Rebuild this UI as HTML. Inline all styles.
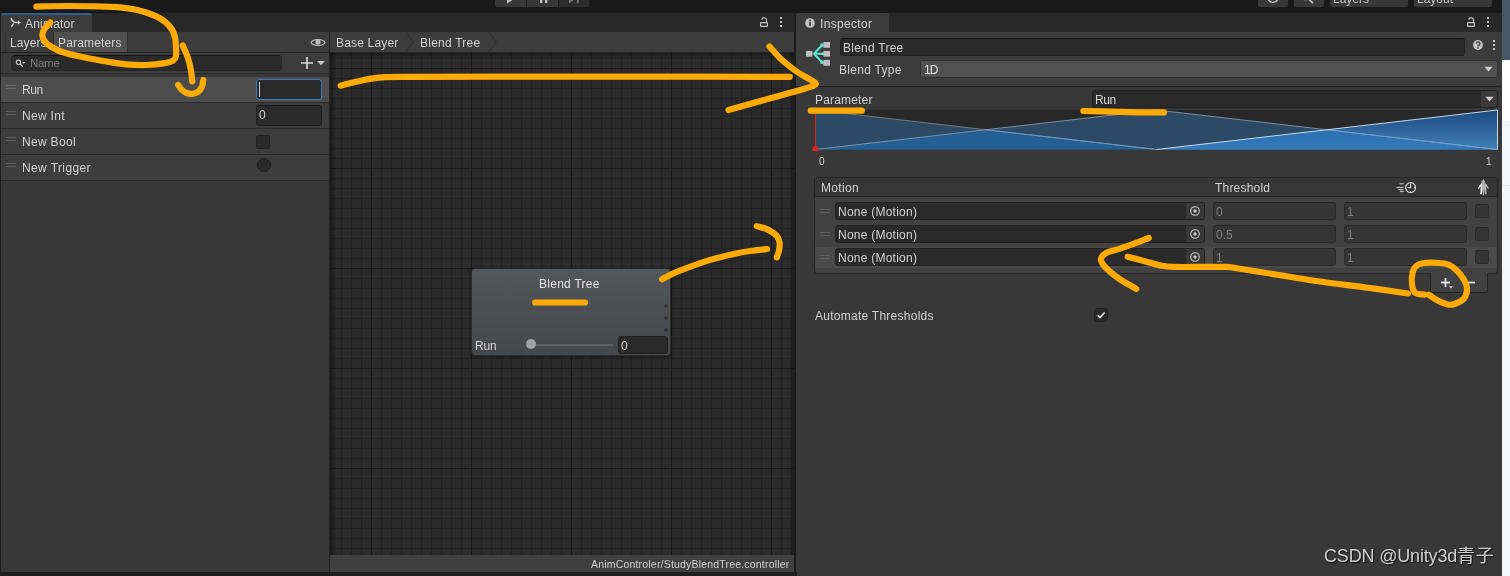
<!DOCTYPE html>
<html lang="en">
<head>
<meta charset="utf-8">
<title>Unity Animator - Blend Tree</title>
<style>
html,body{margin:0;padding:0;}
body{width:1510px;height:576px;overflow:hidden;background:#191919;position:relative;
  font-family:"Liberation Sans","Noto Sans CJK SC",sans-serif;font-size:12px;color:#d2d2d2;}
.a{position:absolute;box-sizing:border-box;}
.t{position:absolute;white-space:nowrap;line-height:14px;height:14px;will-change:transform;}
.field{position:absolute;box-sizing:border-box;background:#2a2a2a;border:1px solid #212121;border-top-color:#161616;border-radius:3px;}
.dis{background:#353535;border-color:#2b2b2b;border-top-color:#262626;}
.hd{position:absolute;width:10px;height:1px;background:#5e5e5e;}
</style>
</head>
<body>

<!-- ===== top application bar ===== -->
<div class="a" id="topbar" style="left:0;top:0;width:1502px;height:13px;background:#191919;"></div>


<!-- top toolbar remnants -->
<div class="a" style="left:495px;top:0;width:31px;height:7px;background:#383838;border-radius:0 0 0 2px;"></div>
<div class="a" style="left:527px;top:0;width:31px;height:7px;background:#383838;"></div>
<div class="a" style="left:559px;top:0;width:30px;height:7px;background:#2c2c2c;border-radius:0 0 2px 0;"></div>
<svg class="a" style="left:495px;top:0;" width="95" height="7" viewBox="0 0 95 7"><path d="M12 -3 L17.2 0.2 L12 3.4 Z" fill="#c4c4c4"/><path d="M45 -2 H47.3 V3 H45 Z M50 -2 H52.3 V3 H50 Z" fill="#c4c4c4"/><path d="M74 -3 L78.6 0.2 L74 3.2 Z M82 -2 H83.8 V3 H82 Z" fill="#7a7a7a"/></svg>
<div class="a" style="left:1258px;top:0;width:30px;height:7px;background:#383838;border-radius:0 0 2px 2px;"></div>
<div class="a" style="left:1294px;top:0;width:30px;height:7px;background:#383838;border-radius:0 0 2px 2px;"></div>
<div class="a" style="left:1330px;top:0;width:78px;height:7px;background:#383838;border-radius:0 0 2px 2px;overflow:hidden;"><div class="t" id="t_toplayers" style="left:3px;top:-8px;color:#c4c4c4;">Layers</div></div>
<div class="a" style="left:1414px;top:0;width:78px;height:7px;background:#383838;border-radius:0 0 2px 2px;overflow:hidden;"><div class="t" id="t_toplayout" style="left:3px;top:-8px;color:#c4c4c4;">Layout</div></div>
<svg class="a" style="left:1258px;top:0;" width="70" height="7" viewBox="0 0 70 7"><circle cx="15" cy="-3" r="5.4" fill="none" stroke="#c4c4c4" stroke-width="1.3"/><path d="M50 -1.5 L54.5 2.6" stroke="#c4c4c4" stroke-width="1.6" stroke-linecap="round"/><circle cx="47" cy="-4" r="3.6" fill="none" stroke="#c4c4c4" stroke-width="1.3"/></svg>

<!-- ===== right page strip ===== -->
<div class="a" style="left:1502px;top:0;width:8px;height:576px;background:#f5f6f7;"></div>
<div class="a" style="left:1502px;top:0;width:8px;height:60px;background:#465a66;"></div>
<div class="a" style="left:1502px;top:60px;width:8px;height:61px;background:#ffffff;"></div>
<div class="a" style="left:1502px;top:185px;width:8px;height:1px;background:#e6e6e8;"></div>

<!-- ===== ANIMATOR WINDOW ===== -->
<div class="a" id="anim" style="left:0;top:13px;width:795px;height:559px;background:#383838;"></div>
<div class="a" id="animtabbar" style="left:0;top:13px;width:795px;height:19px;background:#282828;"></div>


<!-- animator tab -->
<div class="a" style="left:1px;top:13px;width:91px;height:19px;background:#3c3c3c;border-top:2px solid #2c5f8f;border-radius:2px 2px 0 0;"></div>
<svg class="a" style="left:9px;top:17px;" width="14" height="12" viewBox="0 0 14 12"><path d="M2.3 1.4 C2.7 3.4 3.8 4.8 5.6 5.2 L9.6 5.5 M2.7 9.4 L4.4 6.9" fill="none" stroke="#d2d2d2" stroke-width="1.4" stroke-linecap="round"/><path d="M9 3.5 L11.9 5.5 L9 7.6 Z" fill="#d2d2d2"/></svg>
<div class="t" id="t_animator" style="left:25px;top:17px;letter-spacing:0.21px;">Animator</div>
<!-- animator tabbar icons -->
<svg class="a" style="left:758px;top:16px;" width="12" height="12" viewBox="0 0 12 12"><rect x="2.6" y="6.7" width="6.8" height="3.7" rx="0.6" fill="none" stroke="#c8c8c8" stroke-width="1.2"/><path d="M8.5 6.4 V4.3 A2.3 2.3 0 0 0 4 3.4" fill="none" stroke="#c8c8c8" stroke-width="1.2" stroke-linecap="round"/></svg>
<div class="a" style="left:780px;top:17px;width:2px;height:2px;background:#c4c4c4;box-shadow:0 4px 0 #c4c4c4,0 8px 0 #c4c4c4;"></div>

<!-- left panel toolbar -->
<div class="a" style="left:0;top:32px;width:330px;height:21px;background:#3c3c3c;border-bottom:1px solid #232323;"></div>
<div class="a" style="left:5px;top:32px;width:1px;height:20px;background:#2b2b2b;"></div>
<div class="a" style="left:53px;top:32px;width:75px;height:20px;background:#505050;border-left:1px solid #2f2f2f;border-right:1px solid #2f2f2f;"></div>
<div class="t" id="t_layers" style="left:10px;top:36px;letter-spacing:0.11px;">Layers</div>
<div class="t" id="t_params" style="left:58px;top:36px;letter-spacing:0.16px;">Parameters</div>
<svg class="a" style="left:310px;top:37px;" width="16" height="11" viewBox="0 0 16 11"><path d="M1 5.5 C3.5 1.5 12.5 1.5 15 5.5 C12.5 9.5 3.5 9.5 1 5.5 Z" fill="none" stroke="#c8c8c8" stroke-width="1.1"/><circle cx="8" cy="5" r="2.6" fill="#bdbdbd"/></svg>

<!-- search row -->
<div class="a" style="left:0;top:53px;width:330px;height:21px;background:#3c3c3c;border-bottom:1px solid #2a2a2a;"></div>
<div class="field" style="left:11px;top:55px;width:271px;height:16px;border-radius:4px;border-color:#262626;border-top-color:#121212;"></div>
<svg class="a" style="left:15px;top:58px;" width="14" height="11" viewBox="0 0 14 11"><circle cx="3.5" cy="4.3" r="2.2" fill="none" stroke="#cfcfcf" stroke-width="1.1"/><path d="M5.1 6 L7.5 8.4" stroke="#cfcfcf" stroke-width="1.2" stroke-linecap="round"/><path d="M7.2 4 H10.2 L8.7 5.9 Z" fill="#cfcfcf"/></svg>
<div class="t" id="t_name" style="left:30px;top:56px;font-size:11.5px;color:#7c7c7c;letter-spacing:-0.3px;">Name</div>
<svg class="a" style="left:300px;top:56px;" width="27" height="14" viewBox="0 0 27 14"><path d="M1 7 H13 M7 1 V13" stroke="#d6d6d6" stroke-width="1.7"/><path d="M17 5 H25 L21 9.3 Z" fill="#c8c8c8"/></svg>

<!-- parameter rows -->
<div class="a" style="left:0;top:77px;width:330px;height:26px;background:#4d4d4d;border-bottom:1px solid #2a2a2a;"></div>
<div class="a" style="left:0;top:103px;width:330px;height:26px;background:#3d3d3d;border-bottom:1px solid #2a2a2a;"></div>
<div class="a" style="left:0;top:129px;width:330px;height:26px;background:#3d3d3d;border-bottom:1px solid #2a2a2a;"></div>
<div class="a" style="left:0;top:155px;width:330px;height:26px;background:#3d3d3d;border-bottom:1px solid #2a2a2a;"></div>
<div class="hd" style="left:6px;top:85px;background:#6a6a6a;"></div><div class="hd" style="left:6px;top:88px;background:#6a6a6a;"></div>
<div class="hd" style="left:6px;top:111px;"></div><div class="hd" style="left:6px;top:114px;"></div>
<div class="hd" style="left:6px;top:137px;"></div><div class="hd" style="left:6px;top:140px;"></div>
<div class="hd" style="left:6px;top:163px;"></div><div class="hd" style="left:6px;top:166px;"></div>
<div class="t" id="t_run" style="left:22px;top:83px;letter-spacing:-0.4px;">Run</div>
<div class="t" id="t_newint" style="left:22px;top:109px;letter-spacing:0.32px;">New Int</div>
<div class="t" id="t_newbool" style="left:22px;top:135px;letter-spacing:0.32px;">New Bool</div>
<div class="t" id="t_newtrig" style="left:22px;top:161px;letter-spacing:0.39px;">New Trigger</div>
<div class="field" style="left:256px;top:79px;width:66px;height:21px;border-color:#3a79bb;"></div>
<div class="a" style="left:259px;top:82px;width:1px;height:15px;background:#c8c8c8;"></div>
<div class="field" style="left:256px;top:105px;width:66px;height:21px;"></div>
<div class="t" id="t_int0" style="left:259px;top:108px;">0</div>
<div class="field" style="left:256px;top:135px;width:14px;height:14px;border-color:#222;border-radius:2px;"></div>
<div class="a" style="left:257px;top:158px;width:14px;height:14px;border-radius:50%;background:#2a2a2a;border:1px solid #1e1e1e;"></div>
<div class="a" style="left:329px;top:32px;width:1px;height:540px;background:#242424;"></div>


<!-- ===== graph area ===== -->
<div class="a" style="left:330px;top:32px;width:465px;height:21px;background:#3c3c3c;border-bottom:1px solid #232323;"></div>
<svg class="a" style="left:330px;top:32px;" width="180" height="20" viewBox="0 0 180 20"><path d="M75.5 0 L83.5 10 L75.5 20 M158.5 0 L166.5 10 L158.5 20" fill="none" stroke="#2c2c2c" stroke-width="1"/></svg>
<div class="t" id="t_baselayer" style="left:336px;top:36px;letter-spacing:0.18px;">Base Layer</div>
<div class="t" id="t_crumb" style="left:420px;top:36px;letter-spacing:0.23px;">Blend Tree</div>
<svg class="a" id="grid" style="left:330px;top:53px;" width="465" height="502" viewBox="0 0 465 502">
<defs>
<pattern id="gmin" x="1" y="5" width="10" height="10" patternUnits="userSpaceOnUse"><path d="M0.5 0 V10 M0 0.5 H10" stroke="#222222" stroke-width="1" fill="none"/></pattern>
<pattern id="gmaj" x="41" y="15" width="100" height="100" patternUnits="userSpaceOnUse"><path d="M0.5 0 V100 M0 0.5 H100" stroke="#191919" stroke-width="1" fill="none"/></pattern>
<linearGradient id="shT" x1="0" y1="0" x2="0" y2="1"><stop offset="0" stop-color="#000" stop-opacity="0.35"/><stop offset="1" stop-color="#000" stop-opacity="0"/></linearGradient>
<linearGradient id="shL" x1="0" y1="0" x2="1" y2="0"><stop offset="0" stop-color="#000" stop-opacity="0.35"/><stop offset="1" stop-color="#000" stop-opacity="0"/></linearGradient>
<linearGradient id="shR" x1="1" y1="0" x2="0" y2="0"><stop offset="0" stop-color="#000" stop-opacity="0.35"/><stop offset="1" stop-color="#000" stop-opacity="0"/></linearGradient>
</defs>
<rect width="465" height="502" fill="#2a2a2a"/>
<rect width="465" height="502" fill="url(#gmin)"/>
<rect width="465" height="502" fill="url(#gmaj)"/>
<rect width="465" height="6" fill="url(#shT)"/>
<rect width="6" height="502" fill="url(#shL)"/>
<rect x="459" width="6" height="502" fill="url(#shR)"/>
</svg>
<!-- node -->
<div class="a" id="node" style="left:471px;top:268px;width:200px;height:88px;border-radius:4px;border:1px solid #2b2b2b;background:linear-gradient(#53565a,#45484b);box-shadow:0 1px 3px rgba(0,0,0,.5);"></div>
<div class="t" id="t_nodetitle" style="left:539px;top:277px;color:#e4e4e4;letter-spacing:0.27px;">Blend Tree</div>
<div class="a" style="left:664px;top:304px;width:4px;height:4px;border-radius:50%;background:#303234;"></div>
<div class="a" style="left:664px;top:316px;width:4px;height:4px;border-radius:50%;background:#303234;"></div>
<div class="a" style="left:664px;top:328px;width:4px;height:4px;border-radius:50%;background:#303234;"></div>
<div class="t" id="t_noderun" style="left:475px;top:339px;letter-spacing:-0.16px;">Run</div>
<div class="a" style="left:531px;top:344px;width:82px;height:2px;background:#626262;"></div>
<div class="a" style="left:526px;top:339px;width:10px;height:10px;border-radius:50%;background:#a2a2a2;"></div>
<div class="field" style="left:618px;top:336px;width:50px;height:18px;border-color:#202020;"></div>
<div class="t" id="t_node0" style="left:621px;top:339px;">0</div>
<!-- graph bottom bar -->
<div class="a" style="left:330px;top:555px;width:465px;height:17px;background:#404040;"></div>
<div class="t" id="t_path" style="left:591px;top:558px;font-size:10.5px;line-height:12px;height:12px;letter-spacing:0.19px;">AnimControler/StudyBlendTree.controller</div>
<div class="a" style="left:0;top:13px;width:1px;height:559px;background:#1e1e1e;"></div>
<div class="a" style="left:794px;top:13px;width:2px;height:563px;background:#1c1c1c;"></div>

<!-- ===== INSPECTOR WINDOW ===== -->
<div class="a" id="insp" style="left:796px;top:13px;width:706px;height:563px;background:#383838;"></div>
<div class="a" id="insptabbar" style="left:796px;top:13px;width:706px;height:19px;background:#282828;"></div>


<!-- inspector tab -->
<div class="a" style="left:796px;top:13px;width:93px;height:19px;background:#3c3c3c;border-radius:2px 2px 0 0;"></div>
<svg class="a" style="left:804px;top:17px;" width="12" height="12" viewBox="0 0 12 12"><circle cx="6" cy="6" r="4.8" fill="#c4c4c4"/><rect x="5.2" y="5.2" width="1.7" height="3.6" fill="#383838"/><rect x="5.2" y="2.8" width="1.7" height="1.6" fill="#383838"/></svg>
<div class="t" id="t_inspector" style="left:820px;top:17px;letter-spacing:0.33px;">Inspector</div>
<svg class="a" style="left:1465px;top:16px;" width="12" height="12" viewBox="0 0 12 12"><rect x="2.6" y="6.7" width="6.8" height="3.7" rx="0.6" fill="none" stroke="#c8c8c8" stroke-width="1.2"/><path d="M8.5 6.4 V4.3 A2.3 2.3 0 0 0 4 3.4" fill="none" stroke="#c8c8c8" stroke-width="1.2" stroke-linecap="round"/></svg>
<div class="a" style="left:1487px;top:17px;width:2px;height:2px;background:#c4c4c4;box-shadow:0 4px 0 #c4c4c4,0 8px 0 #c4c4c4;"></div>

<!-- inspector header -->
<div class="a" style="left:796px;top:32px;width:706px;height:55px;background:#3c3c3c;border-bottom:1px solid #1f1f1f;"></div>
<svg class="a" id="bticon" style="left:804px;top:40px;" width="28" height="28" viewBox="0 0 28 28">
<rect x="2" y="10.9" width="6.4" height="5.8" fill="#bdbdbd"/><rect x="19.4" y="2" width="6.6" height="5.8" fill="#bdbdbd"/><rect x="19.4" y="10.9" width="6.6" height="5.8" fill="#bdbdbd"/><rect x="19.4" y="19.8" width="6.6" height="6" fill="#bdbdbd"/>
<path d="M10 13.8 L18 5.2 M10 13.8 H18.6 M10 13.8 L18 22.3" stroke="#62e4d0" stroke-width="2" fill="none" stroke-linecap="round"/>
<circle cx="18" cy="5.1" r="1.8" fill="#62e4d0"/><circle cx="18" cy="22.4" r="1.8" fill="#62e4d0"/><circle cx="18.6" cy="13.8" r="1.5" fill="#62e4d0"/>
</svg>
<div class="field" style="left:840px;top:38px;width:625px;height:18px;border-color:#232323;border-top-color:#141414;"></div>
<div class="t" id="t_btname" style="left:843px;top:41px;letter-spacing:0.25px;">Blend Tree</div>
<svg class="a" style="left:1472px;top:39px;" width="12" height="12" viewBox="0 0 12 12"><circle cx="6" cy="6" r="4.9" fill="#c4c4c4"/><path d="M4.3 4.7 A1.8 1.8 0 1 1 6 6.4 V7.3" fill="none" stroke="#3c3c3c" stroke-width="1.3"/><rect x="5.3" y="8.1" width="1.4" height="1.4" fill="#3c3c3c"/></svg>
<div class="a" style="left:1493px;top:40px;width:2px;height:2px;background:#c4c4c4;box-shadow:0 4px 0 #c4c4c4,0 8px 0 #c4c4c4;"></div>
<div class="t" id="t_blendtype" style="left:839px;top:63px;letter-spacing:0.29px;">Blend Type</div>
<div class="a" style="left:920px;top:60px;width:578px;height:18px;background:#515151;border:1px solid #303030;border-radius:3px;"></div>
<div class="t" id="t_1d" style="left:924px;top:63px;color:#e4e4e4;letter-spacing:-1px;">1D</div>
<svg class="a" style="left:1484px;top:66px;" width="9" height="6" viewBox="0 0 9 6"><path d="M0.5 0.8 H8.5 L4.5 5.4 Z" fill="#d0d0d0"/></svg>

<!-- parameter row -->
<div class="t" id="t_parameter" style="left:815px;top:93px;letter-spacing:0.18px;">Parameter</div>
<div class="field" style="left:1092px;top:90px;width:406px;height:18px;border-color:#212121;"></div>
<div class="a" style="left:1481px;top:91px;width:16px;height:16px;background:#3a3a3a;border-radius:0 2px 2px 0;"></div>
<div class="t" id="t_paramrun" style="left:1095px;top:93px;letter-spacing:-0.4px;">Run</div>
<svg class="a" style="left:1485px;top:96px;" width="9" height="6" viewBox="0 0 9 6"><path d="M0.5 0.8 H8.5 L4.5 5.4 Z" fill="#d0d0d0"/></svg>

<!-- blend visualisation -->
<svg class="a" id="blendvis" style="left:815px;top:110px;overflow:visible;" width="683" height="42" viewBox="0 0 683 42">
<defs>
<linearGradient id="bgC" x1="0" y1="0" x2="0" y2="1"><stop offset="0" stop-color="#1a4a80"/><stop offset="1" stop-color="#417fb7"/></linearGradient>
<linearGradient id="bgBC" x1="0" y1="0" x2="0" y2="1"><stop offset="0" stop-color="#2b6fae"/><stop offset="1" stop-color="#3379ba"/></linearGradient>
</defs>
<rect x="0" y="0" width="683" height="39.5" fill="#282828"/>
<path d="M0.5 0 L341.5 39.5 H0.5 Z" fill="#2c4a65"/>
<path d="M0.5 39.5 L341.5 0 L682.5 39.5 Z" fill="#2c4a65"/>
<path d="M0.5 39.5 L171 19.75 L341.5 39.5 Z" fill="#235e94"/>
<path d="M341.5 39.5 L682.5 0 V39.5 Z" fill="url(#bgC)"/>
<path d="M341.5 39.5 L512 19.75 L682.5 39.5 Z" fill="url(#bgBC)"/>
<path d="M0.5 0 L341.5 39.5" stroke="#8c8a88" stroke-width="0.8" fill="none"/>
<path d="M0.5 39.5 L341.5 0 L682.5 39.5" stroke="#8fa3b5" stroke-width="0.8" fill="none"/>
<path d="M171 19.75 L341.5 39.5 M512 19.75 L682.5 39.5" stroke="#6f9fcf" stroke-width="0.8" fill="none"/>
<path d="M341.5 39.5 L682.5 0 V39.5" stroke="#c4d6e8" stroke-width="1" fill="none"/>
<path d="M0.5 0 V37" stroke="#e02020" stroke-width="1"/>
<path d="M0.5 35.3 L3.6 38 V41 H-2.6 V38 Z" fill="#e02020"/>
</svg>
<div class="t" id="t_axis0" style="left:819px;top:156px;font-size:10px;line-height:11px;height:11px;color:#c8c8c8;">0</div>
<div class="t" id="t_axis1" style="left:1486px;top:156px;font-size:10px;line-height:11px;height:11px;color:#c8c8c8;">1</div>

<!-- motion list -->
<div class="a" style="left:814px;top:177px;width:684px;height:97px;background:#414141;border:1px solid #242424;border-radius:3px;"></div>
<div class="a" style="left:815px;top:178px;width:682px;height:19px;background:#363636;border-bottom:1px solid #242424;border-radius:2px 2px 0 0;"></div>
<div class="a" style="left:815px;top:247px;width:682px;height:21px;background:#4a4a4a;"></div>
<div class="t" id="t_motion" style="left:821px;top:181px;letter-spacing:0.35px;">Motion</div>
<div class="t" id="t_threshold" style="left:1215px;top:181px;letter-spacing:0.2px;">Threshold</div>


<div class="hd" style="left:820px;top:209px;"></div><div class="hd" style="left:820px;top:212px;"></div>
<div class="field" style="left:835px;top:202px;width:370px;height:18px;border-color:#212121;"></div>
<div class="a" style="left:1186px;top:203px;width:18px;height:16px;background:#383838;border-radius:0 2px 2px 0;"></div>
<svg class="a" style="left:1189px;top:205px;" width="12" height="12" viewBox="0 0 12 12"><circle cx="6" cy="6" r="4.3" fill="none" stroke="#c8c8c8" stroke-width="1.1"/><circle cx="6" cy="6" r="1.7" fill="#c8c8c8"/></svg>
<div class="t" id="t_none0" style="left:838px;top:205px;letter-spacing:0.24px;">None (Motion)</div>
<div class="field dis" style="left:1213px;top:202px;width:123px;height:18px;"></div>
<div class="t" id="t_th0" style="left:1216px;top:205px;color:#7e7e7e;">0</div>
<div class="field dis" style="left:1344px;top:202px;width:123px;height:18px;"></div>
<div class="t" id="t_ts0" style="left:1347px;top:205px;color:#7e7e7e;">1</div>
<div class="field dis" style="left:1475px;top:204px;width:14px;height:14px;"></div>

<div class="hd" style="left:820px;top:232px;"></div><div class="hd" style="left:820px;top:235px;"></div>
<div class="field" style="left:835px;top:225px;width:370px;height:18px;border-color:#212121;"></div>
<div class="a" style="left:1186px;top:226px;width:18px;height:16px;background:#383838;border-radius:0 2px 2px 0;"></div>
<svg class="a" style="left:1189px;top:228px;" width="12" height="12" viewBox="0 0 12 12"><circle cx="6" cy="6" r="4.3" fill="none" stroke="#c8c8c8" stroke-width="1.1"/><circle cx="6" cy="6" r="1.7" fill="#c8c8c8"/></svg>
<div class="t" id="t_none1" style="left:838px;top:228px;letter-spacing:0.24px;">None (Motion)</div>
<div class="field dis" style="left:1213px;top:225px;width:123px;height:18px;"></div>
<div class="t" id="t_th1" style="left:1216px;top:228px;color:#7e7e7e;">0.5</div>
<div class="field dis" style="left:1344px;top:225px;width:123px;height:18px;"></div>
<div class="t" id="t_ts1" style="left:1347px;top:228px;color:#7e7e7e;">1</div>
<div class="field dis" style="left:1475px;top:227px;width:14px;height:14px;"></div>

<div class="hd" style="left:820px;top:255px;"></div><div class="hd" style="left:820px;top:258px;"></div>
<div class="field" style="left:835px;top:248px;width:370px;height:18px;border-color:#212121;"></div>
<div class="a" style="left:1186px;top:249px;width:18px;height:16px;background:#383838;border-radius:0 2px 2px 0;"></div>
<svg class="a" style="left:1189px;top:251px;" width="12" height="12" viewBox="0 0 12 12"><circle cx="6" cy="6" r="4.3" fill="none" stroke="#c8c8c8" stroke-width="1.1"/><circle cx="6" cy="6" r="1.7" fill="#c8c8c8"/></svg>
<div class="t" id="t_none2" style="left:838px;top:251px;letter-spacing:0.24px;">None (Motion)</div>
<div class="field dis" style="left:1213px;top:248px;width:123px;height:18px;"></div>
<div class="t" id="t_th2" style="left:1216px;top:251px;color:#7e7e7e;">1</div>
<div class="field dis" style="left:1344px;top:248px;width:123px;height:18px;"></div>
<div class="t" id="t_ts2" style="left:1347px;top:251px;color:#7e7e7e;">1</div>
<div class="field dis" style="left:1475px;top:250px;width:14px;height:14px;"></div>

<!-- header icons -->
<svg class="a" id="clockicon" style="left:1396px;top:181px;" width="22" height="14" viewBox="0 0 22 14"><circle cx="14.6" cy="6.6" r="4.9" fill="none" stroke="#dadada" stroke-width="1.2"/><path d="M14.6 2.6 V6.8 H11.6" fill="none" stroke="#dadada" stroke-width="1.1"/><path d="M14.6 10 V11 M18 6.6 H19" stroke="#dadada" stroke-width="0.9"/><path d="M3.5 2.8 H7.8 M0.3 6.4 H7.5 M2.3 8.6 H7.5 M3.9 10.6 H7.8" stroke="#d0d0d0" stroke-width="1"/></svg>
<svg class="a" id="mirroricon" style="left:1477px;top:179px;" width="13" height="17" viewBox="0 0 13 17"><path d="M5.6 1.4 C4.8 1.5 4.4 2.3 4.7 3.2 C4.8 3.6 5.1 3.9 5.4 4 C4 4.3 3 5.2 2.5 6.6 L1 9.6 L1.8 10.1 L3.8 7.3 L3.6 10 L3.2 15.2 H4.8 L5.6 10.4 Z" fill="#f4f4f4"/><path d="M5.6 1.4 C4.8 1.5 4.4 2.3 4.7 3.2 C4.8 3.6 5.1 3.9 5.4 4 C4 4.3 3 5.2 2.5 6.6 L1 9.6 L1.8 10.1 L3.8 7.3 L3.6 10 L3.2 15.2 H4.8 L5.6 10.4 Z" fill="#bdbdbd" transform="translate(12.8,0) scale(-1,1)"/><path d="M6.4 0.6 V16.2" stroke="#f4f4f4" stroke-width="0.8"/></svg>
<!-- list footer -->
<div class="a" style="left:1430px;top:273px;width:58px;height:20px;background:#414141;border:1px solid #242424;border-top:none;border-radius:0 0 3px 3px;"></div>
<svg class="a" style="left:1439px;top:276px;" width="40" height="14" viewBox="0 0 40 14"><path d="M2 6.5 H11 M6.5 2 V11" stroke="#dcdcdc" stroke-width="1.8"/><path d="M10 10.3 H13.8 L11.9 12.6 Z" fill="#dcdcdc"/><path d="M28.5 6.5 H36" stroke="#dcdcdc" stroke-width="1.8"/></svg>
<!-- automate thresholds -->
<div class="t" id="t_auto" style="left:815px;top:309px;letter-spacing:0.26px;">Automate Thresholds</div>
<div class="field" style="left:1094px;top:308px;width:14px;height:14px;border-color:#1f1f1f;"></div>
<svg class="a" style="left:1096px;top:310px;" width="10" height="10" viewBox="0 0 10 10"><path d="M1.6 5.2 L4 7.6 L8.6 2.4" fill="none" stroke="#e8e8e8" stroke-width="1.5"/></svg>
<!-- watermark -->
<div class="t" id="t_wm" style="left:1324px;top:545px;font-size:18px;line-height:22px;height:22px;color:#cfcfcf;text-shadow:1px 1px 1px #111;font-family:'Liberation Sans','Noto Sans CJK SC',sans-serif;letter-spacing:-0.17px;">CSDN @Unity3d<span style="letter-spacing:0.7px;">青子</span></div>

<!-- bottom strip -->
<div class="a" style="left:0;top:572px;width:797px;height:4px;background:#1e1e1e;"></div>

<svg class="a" id="ink" style="left:0;top:0;pointer-events:none;" width="1510" height="576" viewBox="0 0 1510 576"><g fill="none" stroke="#ffaa05" stroke-width="6.2" stroke-linecap="round" stroke-linejoin="round">
<path d="M36.4 6.6 C41.8 6.5 58.4 6.0 69.0 6.0 C79.6 6.0 91.5 6.3 100.0 6.5 C108.5 6.7 113.8 6.7 120.0 7.3 C126.2 7.9 131.6 8.6 137.4 10.0 C143.2 11.4 150.1 13.7 154.7 15.6 C159.3 17.6 162.1 19.4 165.0 21.7 C167.9 24.0 170.3 26.8 172.0 29.5 C173.7 32.2 174.5 35.1 175.2 38.2 C175.9 41.3 175.9 45.1 176.0 48.0 C176.1 50.9 176.4 53.5 176.0 55.5 C175.6 57.5 175.6 59.0 173.5 60.3 C171.4 61.6 168.0 62.6 163.4 63.4 C158.8 64.2 151.6 64.8 146.0 65.0 C140.4 65.2 135.4 65.1 130.0 64.7 C124.5 64.3 119.5 63.6 113.3 62.6 C107.0 61.6 98.6 60.1 92.5 59.0 C86.4 57.9 82.1 57.0 76.9 55.8 C71.7 54.6 65.6 53.2 61.2 51.7 C56.9 50.2 53.6 48.2 50.8 46.5 C48.0 44.8 46.0 43.2 44.6 41.2 C43.2 39.3 42.3 37.1 42.3 35.0 C42.3 32.9 43.3 30.8 44.6 28.8 C45.9 26.7 49.3 23.5 50.3 22.5"/>
<path d="M182.8 45.5 C183.6 47.5 186.4 53.3 187.7 57.3 C189.0 61.3 190.1 65.4 190.8 69.4 C191.6 73.4 192.0 79.3 192.2 81.3"/>
<path d="M178.2 85.0 C178.8 85.8 180.4 88.6 182.0 90.0 C183.6 91.4 185.7 92.7 187.5 93.3 C189.3 93.9 191.2 94.1 193.0 93.8 C194.8 93.5 197.0 92.7 198.5 91.5 C200.0 90.3 201.2 88.4 202.0 86.5 C202.8 84.6 203.1 81.1 203.3 80.0"/>
<path d="M340.6 85.7 C342.5 85.2 348.3 83.7 352.0 82.8 C355.7 81.9 359.5 80.9 363.0 80.2 C366.5 79.5 369.7 78.9 373.0 78.4 C376.3 77.9 378.0 77.5 383.0 77.3 C388.0 77.0 383.3 77.0 402.8 76.9 C422.3 76.8 458.8 76.7 500.0 76.7 C541.2 76.7 601.7 76.7 650.0 76.7 C698.3 76.7 766.5 76.8 789.8 76.8"/>
<path d="M769.5 46.5 C771.5 48.7 777.0 55.3 781.5 59.5 C786.0 63.7 791.6 68.1 796.5 71.5 C801.4 74.9 807.8 77.8 811.0 80.0 C814.2 82.2 816.8 83.0 815.5 84.5 C814.2 86.0 811.2 86.7 803.5 89.0 C795.8 91.3 782.0 95.0 769.5 98.5 C757.0 102.0 735.3 108.1 728.5 110.0"/>
<path d="M810.7 110.7 C819.2 110.7 853.3 110.7 861.8 110.7"/>
<path d="M1083.4 111.0 C1087.8 111.1 1100.6 111.4 1110.0 111.6 C1119.4 111.8 1131.0 112.2 1140.0 112.3 C1149.0 112.4 1160.0 112.4 1164.0 112.4"/>
<path d="M535.2 302.5 C543.5 302.5 576.7 302.5 585.0 302.5"/>
<path d="M662.2 279.2 C663.7 278.4 667.8 276.1 671.0 274.5 C674.2 272.9 675.3 272.3 681.7 269.9 C688.1 267.5 700.1 262.9 709.4 260.1 C718.6 257.3 730.1 254.8 737.2 253.2 C744.3 251.6 747.0 251.5 752.0 250.8 C757.0 250.1 764.6 249.3 767.1 249.0"/>
<path d="M756.7 226.1 C758.6 226.7 764.4 228.0 767.8 229.6 C771.1 231.2 774.8 233.6 776.8 235.8 C778.8 238.0 779.2 240.2 779.6 242.8 C780.0 245.4 779.4 248.7 778.9 251.1 C778.4 253.5 777.1 256.3 776.8 257.4"/>
<path d="M1127.7 256.7 C1130.7 257.5 1140.0 259.9 1145.6 261.4 C1151.2 262.9 1156.6 264.7 1161.2 265.6 C1165.9 266.5 1166.5 266.7 1173.8 266.9 C1181.0 267.1 1196.1 266.9 1205.0 266.9 C1213.9 266.9 1221.2 266.6 1227.0 266.9 C1232.8 267.2 1234.5 267.9 1240.0 268.8 C1245.5 269.6 1247.3 270.0 1260.0 272.0 C1272.7 274.0 1297.7 278.3 1316.0 281.0 C1334.3 283.7 1354.7 285.9 1370.0 288.0 C1385.3 290.1 1401.7 292.6 1408.0 293.5"/>
<path d="M1148.8 238.0 C1146.4 238.9 1139.7 241.6 1134.7 243.4 C1129.7 245.2 1123.7 247.3 1119.0 248.9 C1114.3 250.5 1109.6 251.1 1106.6 252.8 C1103.6 254.5 1101.3 256.6 1101.0 259.0 C1100.7 261.4 1102.0 263.6 1105.0 266.9 C1108.0 270.2 1113.8 275.0 1119.0 278.6 C1124.2 282.2 1133.4 287.1 1136.2 288.8"/>
<path d="M1424.3 294.6 C1422.8 294.3 1417.3 294.5 1415.3 292.8 C1413.2 291.1 1412.5 288.1 1412.0 284.7 C1411.5 281.3 1411.9 275.3 1412.6 272.2 C1413.3 269.1 1414.5 267.5 1416.2 266.0 C1417.9 264.5 1419.1 263.8 1422.5 263.3 C1425.9 262.8 1432.3 262.6 1436.8 262.9 C1441.3 263.2 1445.4 263.1 1449.3 265.0 C1453.2 266.9 1457.2 270.7 1460.0 274.0 C1462.8 277.3 1465.2 281.7 1466.3 284.7 C1467.4 287.7 1467.2 289.5 1466.8 291.9 C1466.3 294.3 1465.6 297.0 1463.6 299.0 C1461.6 301.0 1457.4 303.1 1454.7 304.0 C1452.0 304.9 1450.5 305.1 1447.5 304.4 C1444.5 303.7 1439.9 301.6 1436.8 300.0 C1433.7 298.4 1430.2 295.7 1428.9 294.8"/>
</g></svg>
</body>
</html>
